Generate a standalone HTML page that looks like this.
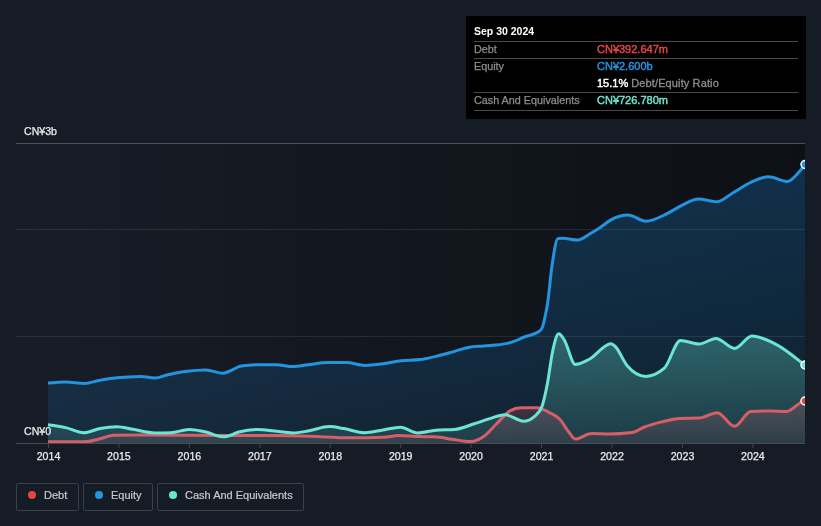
<!DOCTYPE html>
<html><head><meta charset="utf-8"><style>
html,body{margin:0;padding:0;}
body{width:821px;height:526px;background:#151c26;overflow:hidden;position:relative;font-family:"Liberation Sans",sans-serif;}
svg{position:absolute;left:0;top:0;}
.tt{position:absolute;left:466px;top:16px;width:340px;height:103px;background:#000;will-change:transform;}
.tt .t{position:absolute;left:8px;top:9px;color:#fff;font-weight:bold;font-size:10.5px;}
.tt .sep{position:absolute;left:8px;width:324px;height:1px;background:#4a4a4a;}
.tt .l{position:absolute;left:8px;color:#8e8e8e;font-size:10.8px;-webkit-text-stroke:0.25px #8e8e8e;}
.tt .v{position:absolute;left:131px;font-size:11px;font-weight:normal;-webkit-text-stroke:0.45px currentColor;}
.lg{position:absolute;top:483px;height:28px;border:1px solid #3a3f49;border-radius:2px;box-sizing:border-box;color:#cbcbcb;font-size:11px;will-change:transform;-webkit-text-stroke:0.2px #cbcbcb;}
.lg i{position:absolute;left:11px;top:7px;width:8px;height:8px;border-radius:50%;}
.lg span{position:absolute;left:27px;top:5px;}
</style></head><body>
<svg width="821" height="526" viewBox="0 0 821 526">
<defs>
<linearGradient id="bgg" x1="0" x2="1" y1="0" y2="0">
<stop offset="0" stop-color="#171d27"/><stop offset="1" stop-color="#0d1015"/>
</linearGradient>
<linearGradient id="eg" x1="0" x2="0" y1="0" y2="1">
<stop offset="0" stop-color="#1a90e8" stop-opacity="0.25"/><stop offset="1" stop-color="#1a90e8" stop-opacity="0.12"/>
</linearGradient>
<linearGradient id="cg" x1="0" x2="0" y1="0" y2="1">
<stop offset="0" stop-color="#6ce5d2" stop-opacity="0.32"/><stop offset="1" stop-color="#6ce5d2" stop-opacity="0.13"/>
</linearGradient>
<linearGradient id="dg" x1="0" x2="0" y1="0" y2="1">
<stop offset="0" stop-color="#d9636b" stop-opacity="0.24"/><stop offset="1" stop-color="#d9636b" stop-opacity="0.09"/>
</linearGradient>
<clipPath id="pc"><rect x="16" y="143" width="789" height="300"/></clipPath>
</defs>
<rect x="16" y="143" width="789" height="300" fill="url(#bgg)"/>
<g clip-path="url(#pc)">
<path d="M48.0,383.1 C53.90,382.50 59.80,381.90 65.7,381.9 C71.97,381.90 78.23,383.50 84.5,383.5 C89.67,383.50 94.83,381.12 100.0,380.2 C105.67,379.19 111.33,378.37 117.0,377.8 C122.67,377.23 128.33,377.01 134.0,376.8 C136.47,376.71 138.93,376.60 141.4,376.6 C145.83,376.60 150.27,378.10 154.7,378.1 C159.13,378.10 163.57,375.70 168.0,374.7 C173.67,373.42 179.33,372.27 185.0,371.5 C192.00,370.55 199.00,370.00 206.0,370.0 C211.67,370.00 217.33,373.20 223.0,373.2 C225.33,373.20 227.67,371.86 230.0,371.0 C233.67,369.65 237.33,366.57 241.0,366.0 C246.57,365.13 252.13,364.70 257.7,364.7 C263.97,364.70 270.23,364.70 276.5,364.7 C282.00,364.70 287.50,366.60 293.0,366.6 C298.00,366.60 303.00,365.28 308.0,364.7 C314.77,363.91 321.53,362.60 328.3,362.6 C334.37,362.60 340.43,362.60 346.5,362.6 C352.60,362.60 358.70,365.40 364.8,365.4 C370.87,365.40 376.93,364.56 383.0,363.8 C389.10,363.03 395.20,361.50 401.3,360.8 C407.50,360.09 413.70,360.40 419.9,359.6 C424.83,358.96 429.77,357.73 434.7,356.6 C440.47,355.28 446.23,353.67 452.0,352.1 C457.77,350.53 463.53,348.14 469.3,347.2 C474.20,346.40 479.10,346.46 484.0,346.0 C491.80,345.27 499.60,345.13 507.4,343.4 C513.47,342.05 519.53,338.78 525.6,336.5 C530.07,334.82 534.53,334.83 539.0,331.5 C540.17,330.63 541.33,330.00 542.5,327.0 C543.33,324.86 544.17,320.83 545.0,317.0 C545.83,313.17 546.67,309.32 547.5,304.0 C549.00,294.43 550.50,275.91 552.0,265.7 C554.00,252.09 556.00,238.66 558.0,238.5 C559.67,238.37 561.33,238.30 563.0,238.3 C567.87,238.30 572.73,240.00 577.6,240.0 C582.17,240.00 586.73,235.62 591.3,233.0 C594.03,231.43 596.77,229.78 599.5,228.0 C603.30,225.52 607.10,221.95 610.9,219.9 C616.60,216.83 622.30,215.10 628.0,215.1 C634.00,215.10 640.00,221.20 646.0,221.2 C652.67,221.20 659.33,217.33 666.0,214.2 C671.10,211.80 676.20,208.04 681.3,205.6 C687.00,202.87 692.70,199.00 698.4,199.0 C704.63,199.00 710.87,201.80 717.1,201.8 C722.17,201.80 727.23,196.10 732.3,193.2 C738.63,189.58 744.97,185.01 751.3,182.2 C757.00,179.67 762.70,176.70 768.4,176.7 C774.77,176.70 781.13,181.40 787.5,181.4 C790.67,181.40 793.83,177.38 797.0,174.2 C799.67,171.52 802.33,168.01 805.0,164.5 L805.0,443 L48.0,443 Z" fill="url(#eg)"/>
<path d="M48.0,424.7 C53.90,425.48 59.80,426.27 65.7,427.6 C71.70,428.96 77.70,432.80 83.7,432.8 C89.13,432.80 94.57,429.50 100.0,428.5 C105.67,427.46 111.33,426.80 117.0,426.8 C122.17,426.80 127.33,428.46 132.5,429.3 C139.90,430.51 147.30,433.00 154.7,433.0 C160.13,433.00 165.57,432.90 171.0,432.7 C177.00,432.48 183.00,429.50 189.0,429.5 C194.67,429.50 200.33,430.71 206.0,432.0 C211.00,433.14 216.00,436.00 221.0,436.5 C222.33,436.63 223.67,436.70 225.0,436.7 C229.60,436.70 234.20,433.16 238.8,432.0 C245.10,430.41 251.40,429.50 257.7,429.5 C263.27,429.50 268.83,430.45 274.4,431.0 C280.60,431.61 286.80,433.00 293.0,433.0 C298.00,433.00 303.00,431.82 308.0,431.0 C315.13,429.84 322.27,426.60 329.4,426.6 C334.27,426.60 339.13,427.81 344.0,428.6 C350.93,429.72 357.87,432.70 364.8,432.7 C370.87,432.70 376.93,430.94 383.0,430.0 C388.83,429.10 394.67,427.20 400.5,427.2 C406.17,427.20 411.83,433.00 417.5,433.0 C423.67,433.00 429.83,430.67 436.0,430.2 C442.17,429.73 448.33,429.97 454.5,429.5 C461.10,429.00 467.70,425.87 474.3,423.8 C479.20,422.26 484.10,420.37 489.0,418.9 C494.33,417.30 499.67,414.70 505.0,414.7 C511.17,414.70 517.33,421.20 523.5,421.2 C527.20,421.20 530.90,419.57 534.6,416.3 C537.07,414.12 539.53,413.00 542.0,406.4 C543.83,401.49 545.67,392.67 547.5,383.0 C549.17,374.21 550.83,359.90 552.5,352.0 C554.57,342.20 556.63,333.80 558.7,333.8 C560.53,333.80 562.37,337.12 564.2,339.8 C567.90,345.22 571.60,364.40 575.3,364.4 C579.83,364.40 584.37,361.75 588.9,359.5 C596.27,355.85 603.63,343.70 611.0,343.7 C612.27,343.70 613.53,344.94 614.8,346.0 C618.93,349.46 623.07,360.92 627.2,365.7 C633.37,372.83 639.53,376.40 645.7,376.4 C651.90,376.40 658.10,373.67 664.3,368.2 C669.70,363.44 675.10,340.50 680.5,340.5 C686.63,340.50 692.77,344.00 698.9,344.0 C704.60,344.00 710.30,338.50 716.0,338.5 C722.20,338.50 728.40,348.40 734.6,348.4 C740.37,348.40 746.13,336.00 751.9,336.0 C758.50,336.00 765.10,339.10 771.7,342.2 C776.63,344.52 781.57,347.57 786.5,350.9 C791.87,354.52 797.23,359.46 802.6,363.3 C803.40,363.87 804.20,364.44 805.0,365.0 L805.0,443 L48.0,443 Z" fill="url(#cg)"/>
<path d="M48.0,441.7 C60.17,441.70 72.33,441.70 84.5,441.7 C89.67,441.70 94.83,439.96 100.0,438.8 C104.53,437.78 109.07,435.40 113.6,435.3 C122.40,435.10 131.20,435.00 140.0,435.0 C170.00,435.00 200.00,435.40 230.0,435.5 C246.67,435.55 263.33,435.53 280.0,435.6 C290.00,435.64 300.00,435.91 310.0,436.2 C322.93,436.58 335.87,437.80 348.8,437.8 C360.20,437.80 371.60,437.63 383.0,437.3 C388.33,437.14 393.67,435.50 399.0,435.5 C406.00,435.50 413.00,436.50 420.0,436.6 C424.90,436.67 429.80,436.63 434.7,436.7 C440.47,436.78 446.23,438.41 452.0,439.2 C458.20,440.05 464.40,441.60 470.6,441.6 C475.07,441.60 479.53,439.36 484.0,436.2 C488.17,433.25 492.33,427.86 496.5,423.8 C501.00,419.41 505.50,413.52 510.0,410.9 C513.67,408.77 517.33,407.70 521.0,407.7 C526.33,407.70 531.67,407.70 537.0,407.7 C541.13,407.70 545.27,410.44 549.4,412.6 C552.70,414.33 556.00,415.46 559.3,418.8 C562.53,422.08 565.77,428.44 569.0,432.3 C571.10,434.80 573.20,439.00 575.3,439.0 C580.67,439.00 586.03,433.60 591.4,433.6 C597.13,433.60 602.87,434.00 608.6,434.0 C616.43,434.00 624.27,433.50 632.1,432.5 C636.23,431.97 640.37,428.58 644.5,427.0 C650.27,424.80 656.03,423.33 661.8,421.9 C667.57,420.47 673.33,418.57 679.1,418.4 C685.70,418.20 692.30,418.30 698.9,418.1 C705.03,417.91 711.17,412.70 717.3,412.7 C723.07,412.70 728.83,426.30 734.6,426.3 C739.97,426.30 745.33,411.79 750.7,411.5 C756.87,411.17 763.03,411.00 769.2,411.0 C774.97,411.00 780.73,411.50 786.5,411.5 C791.87,411.50 797.23,403.20 802.6,401.6 C803.40,401.36 804.20,401.18 805.0,401.0 L805.0,443 L48.0,443 Z" fill="url(#dg)"/>
</g>
<line x1="16" y1="143.5" x2="805" y2="143.5" stroke="#4c5058" stroke-width="1"/>
<line x1="16" y1="229.5" x2="805" y2="229.5" stroke="#ffffff" stroke-opacity="0.09" stroke-width="1"/>
<line x1="16" y1="336.5" x2="805" y2="336.5" stroke="#ffffff" stroke-opacity="0.09" stroke-width="1"/>
<line x1="16" y1="443.5" x2="805" y2="443.5" stroke="#474b53" stroke-width="1"/>
<line x1="48.50" y1="444" x2="48.50" y2="448" stroke="#40444c" stroke-width="1"/><line x1="118.94" y1="444" x2="118.94" y2="448" stroke="#40444c" stroke-width="1"/><line x1="189.38" y1="444" x2="189.38" y2="448" stroke="#40444c" stroke-width="1"/><line x1="259.82" y1="444" x2="259.82" y2="448" stroke="#40444c" stroke-width="1"/><line x1="330.26" y1="444" x2="330.26" y2="448" stroke="#40444c" stroke-width="1"/><line x1="400.70" y1="444" x2="400.70" y2="448" stroke="#40444c" stroke-width="1"/><line x1="471.14" y1="444" x2="471.14" y2="448" stroke="#40444c" stroke-width="1"/><line x1="541.58" y1="444" x2="541.58" y2="448" stroke="#40444c" stroke-width="1"/><line x1="612.02" y1="444" x2="612.02" y2="448" stroke="#40444c" stroke-width="1"/><line x1="682.46" y1="444" x2="682.46" y2="448" stroke="#40444c" stroke-width="1"/><line x1="752.90" y1="444" x2="752.90" y2="448" stroke="#40444c" stroke-width="1"/>
<g clip-path="url(#pc)" fill="none" stroke-width="3" stroke-linecap="butt" stroke-linejoin="round">
<path d="M48.0,441.7 C60.17,441.70 72.33,441.70 84.5,441.7 C89.67,441.70 94.83,439.96 100.0,438.8 C104.53,437.78 109.07,435.40 113.6,435.3 C122.40,435.10 131.20,435.00 140.0,435.0 C170.00,435.00 200.00,435.40 230.0,435.5 C246.67,435.55 263.33,435.53 280.0,435.6 C290.00,435.64 300.00,435.91 310.0,436.2 C322.93,436.58 335.87,437.80 348.8,437.8 C360.20,437.80 371.60,437.63 383.0,437.3 C388.33,437.14 393.67,435.50 399.0,435.5 C406.00,435.50 413.00,436.50 420.0,436.6 C424.90,436.67 429.80,436.63 434.7,436.7 C440.47,436.78 446.23,438.41 452.0,439.2 C458.20,440.05 464.40,441.60 470.6,441.6 C475.07,441.60 479.53,439.36 484.0,436.2 C488.17,433.25 492.33,427.86 496.5,423.8 C501.00,419.41 505.50,413.52 510.0,410.9 C513.67,408.77 517.33,407.70 521.0,407.7 C526.33,407.70 531.67,407.70 537.0,407.7 C541.13,407.70 545.27,410.44 549.4,412.6 C552.70,414.33 556.00,415.46 559.3,418.8 C562.53,422.08 565.77,428.44 569.0,432.3 C571.10,434.80 573.20,439.00 575.3,439.0 C580.67,439.00 586.03,433.60 591.4,433.6 C597.13,433.60 602.87,434.00 608.6,434.0 C616.43,434.00 624.27,433.50 632.1,432.5 C636.23,431.97 640.37,428.58 644.5,427.0 C650.27,424.80 656.03,423.33 661.8,421.9 C667.57,420.47 673.33,418.57 679.1,418.4 C685.70,418.20 692.30,418.30 698.9,418.1 C705.03,417.91 711.17,412.70 717.3,412.7 C723.07,412.70 728.83,426.30 734.6,426.3 C739.97,426.30 745.33,411.79 750.7,411.5 C756.87,411.17 763.03,411.00 769.2,411.0 C774.97,411.00 780.73,411.50 786.5,411.5 C791.87,411.50 797.23,403.20 802.6,401.6 C803.40,401.36 804.20,401.18 805.0,401.0" stroke="#d65f67"/>
<path d="M48.0,424.7 C53.90,425.48 59.80,426.27 65.7,427.6 C71.70,428.96 77.70,432.80 83.7,432.8 C89.13,432.80 94.57,429.50 100.0,428.5 C105.67,427.46 111.33,426.80 117.0,426.8 C122.17,426.80 127.33,428.46 132.5,429.3 C139.90,430.51 147.30,433.00 154.7,433.0 C160.13,433.00 165.57,432.90 171.0,432.7 C177.00,432.48 183.00,429.50 189.0,429.5 C194.67,429.50 200.33,430.71 206.0,432.0 C211.00,433.14 216.00,436.00 221.0,436.5 C222.33,436.63 223.67,436.70 225.0,436.7 C229.60,436.70 234.20,433.16 238.8,432.0 C245.10,430.41 251.40,429.50 257.7,429.5 C263.27,429.50 268.83,430.45 274.4,431.0 C280.60,431.61 286.80,433.00 293.0,433.0 C298.00,433.00 303.00,431.82 308.0,431.0 C315.13,429.84 322.27,426.60 329.4,426.6 C334.27,426.60 339.13,427.81 344.0,428.6 C350.93,429.72 357.87,432.70 364.8,432.7 C370.87,432.70 376.93,430.94 383.0,430.0 C388.83,429.10 394.67,427.20 400.5,427.2 C406.17,427.20 411.83,433.00 417.5,433.0 C423.67,433.00 429.83,430.67 436.0,430.2 C442.17,429.73 448.33,429.97 454.5,429.5 C461.10,429.00 467.70,425.87 474.3,423.8 C479.20,422.26 484.10,420.37 489.0,418.9 C494.33,417.30 499.67,414.70 505.0,414.7 C511.17,414.70 517.33,421.20 523.5,421.2 C527.20,421.20 530.90,419.57 534.6,416.3 C537.07,414.12 539.53,413.00 542.0,406.4 C543.83,401.49 545.67,392.67 547.5,383.0 C549.17,374.21 550.83,359.90 552.5,352.0 C554.57,342.20 556.63,333.80 558.7,333.8 C560.53,333.80 562.37,337.12 564.2,339.8 C567.90,345.22 571.60,364.40 575.3,364.4 C579.83,364.40 584.37,361.75 588.9,359.5 C596.27,355.85 603.63,343.70 611.0,343.7 C612.27,343.70 613.53,344.94 614.8,346.0 C618.93,349.46 623.07,360.92 627.2,365.7 C633.37,372.83 639.53,376.40 645.7,376.4 C651.90,376.40 658.10,373.67 664.3,368.2 C669.70,363.44 675.10,340.50 680.5,340.5 C686.63,340.50 692.77,344.00 698.9,344.0 C704.60,344.00 710.30,338.50 716.0,338.5 C722.20,338.50 728.40,348.40 734.6,348.4 C740.37,348.40 746.13,336.00 751.9,336.0 C758.50,336.00 765.10,339.10 771.7,342.2 C776.63,344.52 781.57,347.57 786.5,350.9 C791.87,354.52 797.23,359.46 802.6,363.3 C803.40,363.87 804.20,364.44 805.0,365.0" stroke="#6ce5d2"/>
<path d="M48.0,383.1 C53.90,382.50 59.80,381.90 65.7,381.9 C71.97,381.90 78.23,383.50 84.5,383.5 C89.67,383.50 94.83,381.12 100.0,380.2 C105.67,379.19 111.33,378.37 117.0,377.8 C122.67,377.23 128.33,377.01 134.0,376.8 C136.47,376.71 138.93,376.60 141.4,376.6 C145.83,376.60 150.27,378.10 154.7,378.1 C159.13,378.10 163.57,375.70 168.0,374.7 C173.67,373.42 179.33,372.27 185.0,371.5 C192.00,370.55 199.00,370.00 206.0,370.0 C211.67,370.00 217.33,373.20 223.0,373.2 C225.33,373.20 227.67,371.86 230.0,371.0 C233.67,369.65 237.33,366.57 241.0,366.0 C246.57,365.13 252.13,364.70 257.7,364.7 C263.97,364.70 270.23,364.70 276.5,364.7 C282.00,364.70 287.50,366.60 293.0,366.6 C298.00,366.60 303.00,365.28 308.0,364.7 C314.77,363.91 321.53,362.60 328.3,362.6 C334.37,362.60 340.43,362.60 346.5,362.6 C352.60,362.60 358.70,365.40 364.8,365.4 C370.87,365.40 376.93,364.56 383.0,363.8 C389.10,363.03 395.20,361.50 401.3,360.8 C407.50,360.09 413.70,360.40 419.9,359.6 C424.83,358.96 429.77,357.73 434.7,356.6 C440.47,355.28 446.23,353.67 452.0,352.1 C457.77,350.53 463.53,348.14 469.3,347.2 C474.20,346.40 479.10,346.46 484.0,346.0 C491.80,345.27 499.60,345.13 507.4,343.4 C513.47,342.05 519.53,338.78 525.6,336.5 C530.07,334.82 534.53,334.83 539.0,331.5 C540.17,330.63 541.33,330.00 542.5,327.0 C543.33,324.86 544.17,320.83 545.0,317.0 C545.83,313.17 546.67,309.32 547.5,304.0 C549.00,294.43 550.50,275.91 552.0,265.7 C554.00,252.09 556.00,238.66 558.0,238.5 C559.67,238.37 561.33,238.30 563.0,238.3 C567.87,238.30 572.73,240.00 577.6,240.0 C582.17,240.00 586.73,235.62 591.3,233.0 C594.03,231.43 596.77,229.78 599.5,228.0 C603.30,225.52 607.10,221.95 610.9,219.9 C616.60,216.83 622.30,215.10 628.0,215.1 C634.00,215.10 640.00,221.20 646.0,221.2 C652.67,221.20 659.33,217.33 666.0,214.2 C671.10,211.80 676.20,208.04 681.3,205.6 C687.00,202.87 692.70,199.00 698.4,199.0 C704.63,199.00 710.87,201.80 717.1,201.8 C722.17,201.80 727.23,196.10 732.3,193.2 C738.63,189.58 744.97,185.01 751.3,182.2 C757.00,179.67 762.70,176.70 768.4,176.7 C774.77,176.70 781.13,181.40 787.5,181.4 C790.67,181.40 793.83,177.38 797.0,174.2 C799.67,171.52 802.33,168.01 805.0,164.5" stroke="#2394df"/>
<circle cx="805" cy="164.5" r="4" fill="#2394df" stroke="#fff" stroke-width="1.5"/>
<circle cx="805" cy="365" r="4" fill="#6ce5d2" stroke="#fff" stroke-width="1.5"/>
<circle cx="805" cy="401" r="4" fill="#e64545" stroke="#fff" stroke-width="1.5"/>
</g>
<g font-family="Liberation Sans" font-size="10.6" fill="#ececec" stroke="#ececec" stroke-width="0.25" style="will-change:transform">
<text x="24" y="135">CN¥3b</text>
<text x="24" y="435">CN¥0</text>
<text x="48.5" y="460" text-anchor="middle">2014</text><text x="118.9" y="460" text-anchor="middle">2015</text><text x="189.4" y="460" text-anchor="middle">2016</text><text x="259.8" y="460" text-anchor="middle">2017</text><text x="330.3" y="460" text-anchor="middle">2018</text><text x="400.7" y="460" text-anchor="middle">2019</text><text x="471.1" y="460" text-anchor="middle">2020</text><text x="541.6" y="460" text-anchor="middle">2021</text><text x="612.0" y="460" text-anchor="middle">2022</text><text x="682.5" y="460" text-anchor="middle">2023</text><text x="752.9" y="460" text-anchor="middle">2024</text>
</g>
</svg>
<div class="tt">
<div class="t">Sep 30 2024</div>
<div class="sep" style="top:25px"></div>
<div class="l" style="top:27px">Debt</div><div class="v" style="top:27px;color:#e64545">CN¥392.647m</div>
<div class="sep" style="top:42px"></div>
<div class="l" style="top:44px">Equity</div><div class="v" style="top:44px;color:#2394df">CN¥2.600b</div>
<div class="v" style="top:61px;color:#fff">15.1% <span style="color:#8e8e8e;font-weight:normal;font-size:11px;letter-spacing:0.12px;-webkit-text-stroke:0.3px #8e8e8e">Debt/Equity Ratio</span></div>
<div class="sep" style="top:76px"></div>
<div class="l" style="top:78px">Cash And Equivalents</div><div class="v" style="top:78px;color:#6ce5d2">CN¥726.780m</div>
<div class="sep" style="top:94px"></div>
</div>
<div class="lg" style="left:16px;width:63px"><i style="background:#e64545"></i><span>Debt</span></div>
<div class="lg" style="left:83px;width:70px"><i style="background:#2394df"></i><span>Equity</span></div>
<div class="lg" style="left:157px;width:147px"><i style="background:#6ce5d2"></i><span>Cash And Equivalents</span></div>
</body></html>
